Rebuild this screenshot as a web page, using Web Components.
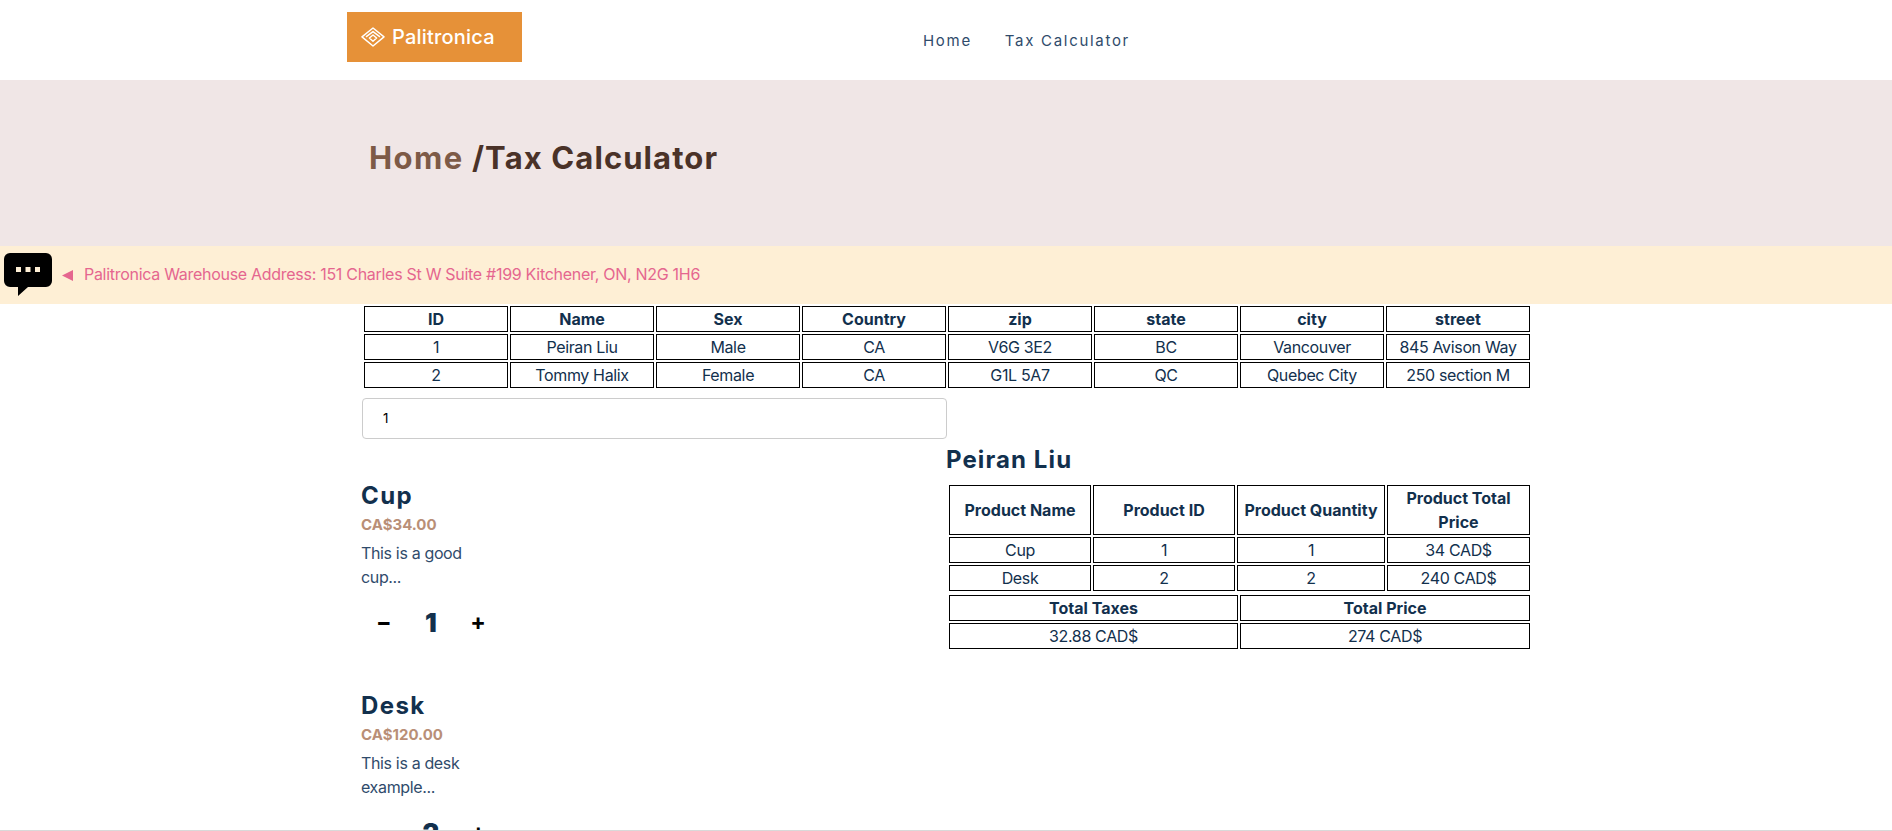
<!DOCTYPE html>
<html>
<head>
<meta charset="utf-8">
<title>Tax Calculator</title>
<style>
    html, body {
        margin: 0;
        height: 831px;
        overflow: hidden;
        background: #fff;
        font-family: Inter, "Liberation Sans", sans-serif;
        color: #12304d;
    }
    body {
        box-sizing: border-box;
        border-bottom: 1px solid #d9d9d9;
    }
</style>
</head>
<body>
    <site-header></site-header>
    <page-hero current="Tax Calculator"></page-hero>
    <notice-bar>Palitronica Warehouse Address: 151 Charles St W Suite #199 Kitchener, ON, N2G 1H6</notice-bar>
    <main-area>
        <data-table id="customers"></data-table>
        <customer-select slot="select" value="1"></customer-select>
        <product-card slot="products" price="CA$34.00" qty="1">
            <span slot="name">Cup</span>
            This is a good cup...
        </product-card>
        <product-card slot="products" price="CA$120.00" qty="2">
            <span slot="name">Desk</span>
            This is a desk example...
        </product-card>
        <order-summary slot="summary" name="Peiran Liu">
            <data-table id="order"></data-table>
            <data-table id="totals"></data-table>
        </order-summary>
    </main-area>

<script>
class SiteHeader extends HTMLElement {
    constructor() {
        super();
        this.$shadow = this.attachShadow({ mode: 'open' });
    }

    connectedCallback() {
        this.$shadow.innerHTML = `
        <style>
            :host { display: block; height: 80px; }
            .wrap { width: 1200px; margin: 0 auto; display: flex; }
            .logo {
                width: 175px;
                height: 50px;
                margin: 12px 0 0 1px;
                background: #e69138;
                color: #fff;
                display: flex;
                align-items: center;
                gap: 7px;
                padding-left: 14px;
                box-sizing: border-box;
                font-size: 20px;
                font-weight: 500;
                letter-spacing: 0.2px;
            }
            nav {
                display: flex;
                gap: 33px;
                margin: 32px 0 0 401px;
                font-size: 15px;
                line-height: 18px;
                letter-spacing: 1.7px;
                color: #2f4b6b;
            }
        </style>
        <div class="wrap">
            <div class="logo">
                <svg width="24" height="20" viewBox="0 0 24 20" fill="none" stroke="#fff" stroke-width="1.5" stroke-linejoin="round">
                    <path d="M12 1 L23 9.8 L12 19 L1 9.8 Z"/>
                    <path d="M5 9.8 L12 4.6 L19 9.8"/>
                    <path d="M12 8 L15.6 11 L12 14.2 L8.4 11 Z"/>
                </svg>
                <span>Palitronica</span>
            </div>
            <nav><span>Home</span><span>Tax Calculator</span></nav>
        </div>`;
    }
}

class PageHero extends HTMLElement {
    constructor() {
        super();
        this.$shadow = this.attachShadow({ mode: 'open' });
    }

    connectedCallback() {
        this.$shadow.innerHTML = `
        <style>
            :host { display: block; height: 166px; background: #f0e6e6; }
            h1 {
                width: 1170px;
                margin: 0 auto;
                padding: 58px 0 0 8px;
                box-sizing: border-box;
                font-size: 31px;
                line-height: 40px;
                font-weight: 700;
                letter-spacing: 1.1px;
                color: #4a3228;
            }
            span { color: #7d5a47; letter-spacing: 1.4px; }
        </style>
        <h1><span>Home</span> /${this.getAttribute('current')}</h1>`;
    }
}

class NoticeBar extends HTMLElement {
    constructor() {
        super();
        this.$shadow = this.attachShadow({ mode: 'open' });
    }

    connectedCallback() {
        this.$shadow.innerHTML = `
        <style>
            :host {
                display: flex;
                align-items: center;
                height: 58px;
                background: #feefd5;
                color: #e5668f;
                font-size: 16px;
                letter-spacing: -0.29px;
            }
            .bubble { margin: 0 0 0 4px; flex: none; }
            .arrow { margin: 0 11px 0 10px; flex: none; }
            .text { margin-top: -2px; }
        </style>
        <svg class="bubble" width="48" height="44" viewBox="0 0 48 44">
            <path d="M6 0 H42 A6 6 0 0 1 48 6 V28 A6 6 0 0 1 42 34 H24 L14 43 V34 H6 A6 6 0 0 1 0 28 V6 A6 6 0 0 1 6 0 Z" fill="#000"/>
            <rect x="12" y="14" width="5" height="5" fill="#feefd5"/>
            <rect x="21.5" y="14" width="5" height="5" fill="#feefd5"/>
            <rect x="31" y="14" width="5" height="5" fill="#feefd5"/>
        </svg>
        <svg class="arrow" width="11" height="11" viewBox="0 0 11 11"><path d="M0 5.5 L11 0 V11 Z" fill="#e5668f"/></svg>
        <span class="text"><slot></slot></span>`;
    }
}

class MainArea extends HTMLElement {
    constructor() {
        super();
        this.$shadow = this.attachShadow({ mode: 'open' });
    }

    connectedCallback() {
        this.$shadow.innerHTML = `
        <style>
            :host { display: block; width: 1170px; margin: 0 auto; }
            .top { padding-left: 1px; }
            .cols { display: flex; }
            .left { width: 585px; flex: none; }
        </style>
        <div class="top"><slot></slot></div>
        <div class="cols">
            <div class="left">
                <slot name="select"></slot>
                <slot name="products"></slot>
            </div>
            <div class="right"><slot name="summary"></slot></div>
        </div>`;
    }
}

class DataTable extends HTMLElement {
    constructor() {
        super();
        this.$shadow = this.attachShadow({ mode: 'open' });
    }

    // columns and rows are set from the page script
    setData(head, rows, widths) {
        const cols = widths.map(w => `<col style="width:${w}px">`).join('');
        const th = head.map(h => `<th>${h}</th>`).join('');
        const trs = rows.map(r => `<tr>${r.map(c => `<td>${c}</td>`).join('')}</tr>`).join('');
        this.$shadow.innerHTML = `
        <style>
            :host { display: block; }
            table {
                border-collapse: separate;
                border-spacing: 2px;
                table-layout: fixed;
                width: ${widths.reduce((a, b) => a + b, 0) + (widths.length + 1) * 2}px;
                font-size: 16px;
                line-height: 24px;
                color: #12304d;
            }
            th, td {
                border: 1px solid #000;
                padding: 0;
                text-align: center;
                box-sizing: border-box;
                height: 26px;
            }
            th { font-weight: 700; }
            td { letter-spacing: -0.35px; }
        </style>
        <table><colgroup>${cols}</colgroup><tr>${th}</tr>${trs}</table>`;
    }
}

class CustomerSelect extends HTMLElement {
    constructor() {
        super();
        this.$shadow = this.attachShadow({ mode: 'open' });
    }

    connectedCallback() {
        this.$shadow.innerHTML = `
        <style>
            :host { display: block; }
            .box {
                box-sizing: border-box;
                width: 585px;
                height: 41px;
                margin: 8px 0 41px 1px;
                border: 1px solid #ccc;
                border-radius: 4px;
                padding-left: 20px;
                font-size: 13.33px;
                line-height: 39px;
                color: #000;
            }
        </style>
        <div class="box">${this.getAttribute('value')}</div>`;
    }
}

class ProductCard extends HTMLElement {
    constructor() {
        super();
        this.$shadow = this.attachShadow({ mode: 'open' });
    }

    connectedCallback() {
        this.$shadow.innerHTML = `
        <style>
            :host { display: block; width: 130px; height: 210px; color: #2f4b6b; }
            h3 {
                margin: 0;
                font-size: 24px;
                line-height: 32px;
                letter-spacing: 1.4px;
                font-weight: 700;
                color: #12304d;
            }
            .price {
                font-size: 15px;
                line-height: 20px;
                font-weight: 700;
                color: #b98f77;
                margin: 3px 0 6px;
            }
            .desc { font-size: 16px; line-height: 24px; letter-spacing: -0.35px; }
            .qty {
                display: flex;
                align-items: center;
                justify-content: space-between;
                width: 110px;
                margin: 17px 0 0 15px;
                height: 32px;
                color: #000;
                font-size: 23px;
                font-weight: 700;
            }
            .qty b { font-size: 26px; color: #12304d; }
        </style>
        <h3><slot name="name"></slot></h3>
        <div class="price">${this.getAttribute('price')}</div>
        <div class="desc"><slot></slot></div>
        <div class="qty"><span>−</span><b>${this.getAttribute('qty')}</b><span>+</span></div>`;
    }
}

class OrderSummary extends HTMLElement {
    constructor() {
        super();
        this.$shadow = this.attachShadow({ mode: 'open' });
    }

    connectedCallback() {
        this.$shadow.innerHTML = `
        <style>
            :host { display: block; margin-top: 54px; margin-left: 1px; }
            h3 {
                margin: 0 0 7px -1px;
                font-size: 24px;
                line-height: 32px;
                letter-spacing: 1.1px;
                font-weight: 700;
                color: #12304d;
            }
        </style>
        <h3>${this.getAttribute('name')}</h3>
        <slot></slot>`;
    }
}

window.customElements.define('site-header', SiteHeader);
window.customElements.define('page-hero', PageHero);
window.customElements.define('notice-bar', NoticeBar);
window.customElements.define('main-area', MainArea);
window.customElements.define('data-table', DataTable);
window.customElements.define('customer-select', CustomerSelect);
window.customElements.define('product-card', ProductCard);
window.customElements.define('order-summary', OrderSummary);

document.getElementById('customers').setData(
    ['ID', 'Name', 'Sex', 'Country', 'zip', 'state', 'city', 'street'],
    [
        ['1', 'Peiran Liu', 'Male', 'CA', 'V6G 3E2', 'BC', 'Vancouver', '845 Avison Way'],
        ['2', 'Tommy Halix', 'Female', 'CA', 'G1L 5A7', 'QC', 'Quebec City', '250 section M']
    ],
    [144, 144, 144, 144, 144, 144, 144, 144]
);
document.getElementById('order').setData(
    ['Product Name', 'Product ID', 'Product Quantity', 'Product Total Price'],
    [
        ['Cup', '1', '1', '34 CAD$'],
        ['Desk', '2', '2', '240 CAD$']
    ],
    [142, 142, 148, 143]
);
document.getElementById('totals').setData(
    ['Total Taxes', 'Total Price'],
    [['32.88 CAD$', '274 CAD$']],
    [289, 290]
);
</script>
</body>
</html>
